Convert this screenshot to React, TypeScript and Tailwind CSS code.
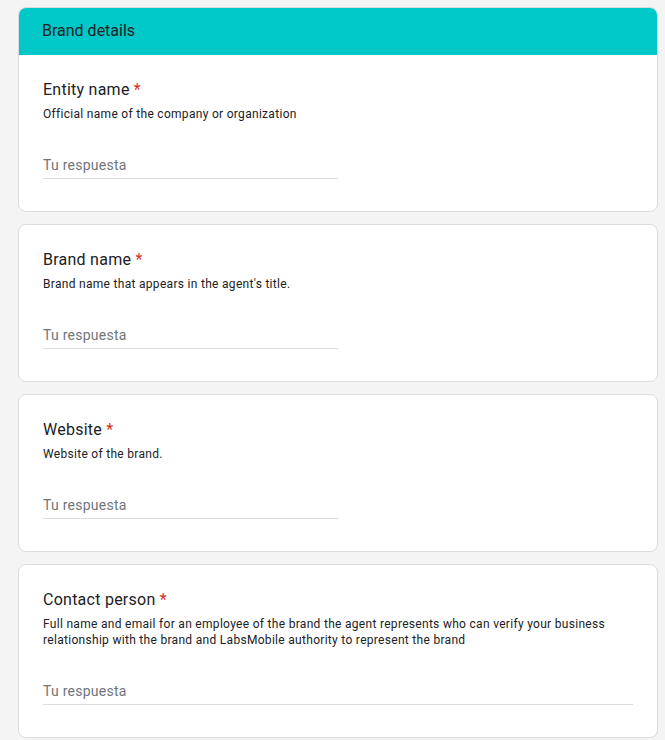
const QUESTIONS = [
  {
    title: "Entity name",
    help: "Official name of the company or organization",
    wide: false,
  },
  {
    title: "Brand name",
    help: "Brand name that appears in the agent's title.",
    wide: false,
  },
  {
    title: "Website",
    help: "Website of the brand.",
    wide: false,
  },
  {
    title: "Contact person",
    help: "Full name and email for an employee of the brand the agent represents who can verify your business relationship with the brand and LabsMobile authority to represent the brand",
    wide: true,
  },
];

function Question({ title, help, wide }: { title: string; help: string; wide: boolean }) {
  return (
    <div className="pt-[23px] pb-[32px] px-6">
      <div className="text-[16px] leading-6 tracking-[0.25px] text-[#202124]">
        {title} <span className="text-[#d93025]">*</span>
      </div>
      <div className="mt-1 text-[12px] leading-4 tracking-[0.3px] text-[#202124]">{help}</div>
      <div
        className={`mt-[33px] border-b border-[#dadce0] pb-[3px] ${wide ? "w-full" : "w-[295px]"}`}
      >
        <input
          placeholder="Tu respuesta"
          className="block w-full h-5 p-0 text-[14px] leading-5 tracking-[0.25px] text-[#202124] placeholder:text-[#70757a] bg-transparent outline-none"
        />
      </div>
    </div>
  );
}

export default function App() {
  return (
    <div
      className="min-h-[740px] bg-[#f4f4f4] pt-[7px] pl-[18px]"
      style={{ fontFamily: "Roboto, 'Liberation Sans', sans-serif" }}
    >
      <div className="flex flex-col gap-[12px] w-[640px]">
        {QUESTIONS.map((q, i) => (
          <div
            key={q.title}
            className="bg-white border border-[#dadce0] rounded-lg overflow-hidden"
          >
            {i === 0 && (
              <div className="bg-[#00c8c8] h-[48px] px-6 flex items-center text-[16px] text-[#202124] -mx-px -mt-px">
                Brand details
              </div>
            )}
            <Question {...q} />
          </div>
        ))}
      </div>
    </div>
  );
}
